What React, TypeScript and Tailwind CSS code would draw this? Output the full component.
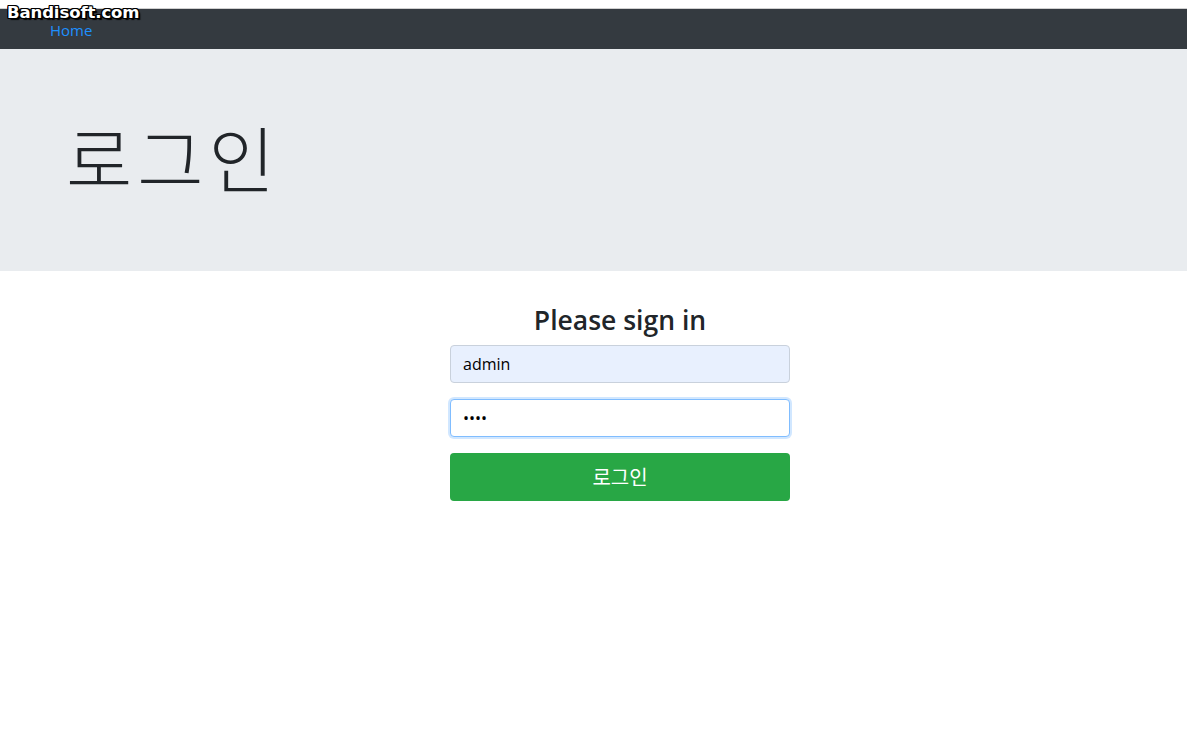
export default function App() {
  const outline =
    "[text-shadow:1px_1px_0_#000,-1px_-1px_0_#000,1px_-1px_0_#000,-1px_1px_0_#000,0_1px_0_#000,0_-1px_0_#000,1px_0_0_#000,-1px_0_0_#000,2px_2px_1px_#000]";
  return (
    <div className="relative min-h-[747px] w-[1187px] bg-white font-['Open_Sans','Noto_Sans_CJK_KR',sans-serif] text-[#212529]">
      {/* recorder watermark */}
      <div
        className={`absolute left-[7px] top-[1px] z-10 font-['DejaVu_Sans',sans-serif] text-[16.5px] font-bold tracking-[-0.1px] text-white ${outline}`}
      >
        Bandisoft.com
      </div>

      <div className="h-[9px] border-b border-[#d0d0d0] bg-white" />

      <nav className="flex h-[40px] items-center bg-[#343a40] pl-[50px]">
        <a className="pt-[2px] text-[15px] leading-none text-[#1e90ff]">Home</a>
      </nav>

      <header className="flex h-[222px] items-center bg-[#e9ecef] pl-[66px]">
        <h1 className="pb-[8px] font-['Noto_Sans_CJK_KR',sans-serif] text-[72px] font-light leading-none tracking-[5px] text-[#212529]">
          로그인
        </h1>
      </header>

      <main className="flex justify-center pl-[53px] pt-[31px]">
        <form className="flex w-[340px] flex-col" onSubmit={(e) => e.preventDefault()}>
          <h3 className="mb-[7px] text-center text-[26.5px] font-semibold leading-[36px]">Please sign in</h3>
          <input
            defaultValue="admin"
            className="mb-[16px] h-[38px] rounded-[4px] border border-[#c9d1dc] bg-[#e8f0fe] px-[12px] text-[16px] text-black outline-none"
          />
          <input
            type="password"
            defaultValue="1234"
            className="mb-[16px] h-[38px] rounded-[4px] border border-[#80bdff] bg-white px-[12px] text-[16px] text-black shadow-[0_0_0_2px_rgba(0,123,255,0.18)] outline-none"
          />
          <button
            type="submit"
            className="h-[48px] rounded-[4px] bg-[#28a745] font-['Noto_Sans_CJK_KR',sans-serif] text-[20px] text-white"
          >
            로그인
          </button>
        </form>
      </main>
    </div>
  );
}
